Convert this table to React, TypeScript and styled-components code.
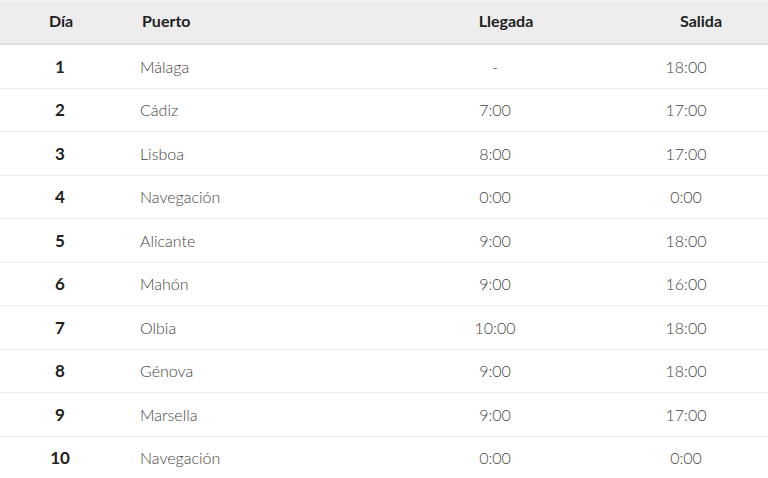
import styled, { createGlobalStyle } from "styled-components"

const GlobalStyle = createGlobalStyle`
    html, body {
        margin: 0;
        padding: 0;
        background: #ffffff;
    }
    body {
        font-family: Lato, "Open Sans", "Liberation Sans", sans-serif;
    }
`

interface IStop {
    day: number;
    port: string;
    arrival: string;
    departure: string;
}

const stops: IStop[] = [
    { day: 1, port: "Málaga", arrival: "-", departure: "18:00" },
    { day: 2, port: "Cádiz", arrival: "7:00", departure: "17:00" },
    { day: 3, port: "Lisboa", arrival: "8:00", departure: "17:00" },
    { day: 4, port: "Navegación", arrival: "0:00", departure: "0:00" },
    { day: 5, port: "Alicante", arrival: "9:00", departure: "18:00" },
    { day: 6, port: "Mahón", arrival: "9:00", departure: "16:00" },
    { day: 7, port: "Olbia", arrival: "10:00", departure: "18:00" },
    { day: 8, port: "Génova", arrival: "9:00", departure: "18:00" },
    { day: 9, port: "Marsella", arrival: "9:00", departure: "17:00" },
    { day: 10, port: "Navegación", arrival: "0:00", departure: "0:00" },
]

type Align = "center" | "left"

export default function App() {
    return (
        <>
            <GlobalStyle />
            <Itinerary>
                <colgroup>
                    <col style={{ width: 120 }} />
                    <col style={{ width: 266 }} />
                    <col style={{ width: 218 }} />
                    <col style={{ width: 164 }} />
                </colgroup>
                <thead>
                    <HeadRow>
                        <HeadCell align="center" shift={2}>Día</HeadCell>
                        <HeadCell align="left" shift={22}>Puerto</HeadCell>
                        <HeadCell align="center" shift={22}>Llegada</HeadCell>
                        <HeadCell align="center" shift={30}>Salida</HeadCell>
                    </HeadRow>
                </thead>
                <tbody>
                    {stops.map(s => (
                        <Row key={s.day}>
                            <DayCell>{s.day}</DayCell>
                            <Cell align="left">{s.port}</Cell>
                            <Cell align="center">{s.arrival}</Cell>
                            <Cell align="center">{s.departure}</Cell>
                        </Row>
                    ))}
                </tbody>
            </Itinerary>
        </>
    )
}

const Itinerary = styled.table`
    width: 768px;
    table-layout: fixed;
    border-collapse: collapse;
    border-spacing: 0;
`

const HeadRow = styled.tr`
    background: #ededed;
    border-top: 1px solid #f4f4f4;
    border-bottom: 2px solid #dcdde0;
`

const HeadCell = styled.th<{ align: Align; shift: number }>`
    height: 38px;
    padding: 0 0 4px ${props => props.shift}px;
    text-align: ${props => props.align};
    font-size: 16px;
    font-weight: 700;
    color: #222222;
`

const Row = styled.tr`
    border-top: 1px solid #ececee;
    &:first-child {
        border-top: none;
    }
`

const Cell = styled.td<{ align: Align }>`
    height: 42.5px;
    padding: 0 0 0 ${props => props.align === "left" ? 20 : 0}px;
    text-align: ${props => props.align};
    font-size: 16px;
    font-weight: 300;
    color: #444444;
`

const DayCell = styled.td`
    height: 42.5px;
    padding: 0;
    text-align: center;
    font-size: 17px;
    font-weight: 700;
    color: #222222;
`
